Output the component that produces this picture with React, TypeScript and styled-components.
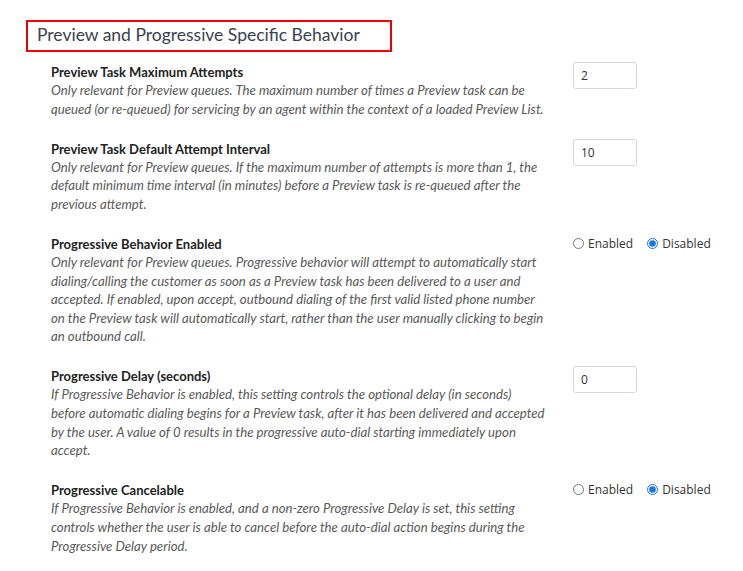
import React from "react";
import styled, { createGlobalStyle } from "styled-components";

const Global = createGlobalStyle`
  html, body { margin: 0; padding: 0; background: #fff; }
  body { font-family: Lato, "Liberation Sans", sans-serif; }
`;

const Page = styled.div`
  width: 743px;
  height: 571px;
  padding: 20px 0 0 26px;
  box-sizing: border-box;
  overflow: hidden;
`;

const Title = styled.h2`
  margin: 0;
  display: inline-block;
  width: 366px;
  height: 32px;
  box-sizing: border-box;
  border: 2px solid #f00000;
  padding: 1px 0 0 9px;
  font-size: 17.5px;
  font-weight: 400;
  color: #3a4150;
  line-height: 24px;
`;

const List = styled.div`
  display: flex;
  flex-direction: column;
  padding: 11px 0 0 25px;
  gap: 21.5px;
`;

const Row = styled.div`
  display: grid;
  grid-template-columns: 522px 1fr;
  align-items: start;
`;

const Info = styled.div`
  display: flex;
  flex-direction: column;
`;

const Label = styled.div`
  font-size: 13px;
  font-weight: 700;
  color: #222;
  line-height: 18px;
`;

const Desc = styled.div`
  font-size: 13.2px;
  font-style: italic;
  color: #595959;
  line-height: 18.6px;
`;

const DescLine = styled.span`
  display: block;
  white-space: nowrap;
`;

const Control = styled.div<{ $offset: number }>`
  margin-top: ${(p) => p.$offset}px;
  display: flex;
  align-items: center;
  gap: 14px;
`;

const NumInput = styled.input`
  width: 64px;
  height: 27px;
  box-sizing: border-box;
  border: 1px solid #d3d8de;
  border-radius: 3px;
  padding: 0 7px;
  font-family: "Open Sans", sans-serif;
  font-size: 12px;
  color: #333;
  outline: none;
`;

const RadioLabel = styled.label`
  display: flex;
  align-items: center;
  gap: 4px;
  font-family: "Open Sans", sans-serif;
  font-size: 12px;
  color: #333;
`;

const Radio = styled.input`
  margin: 0;
  width: 11px;
  height: 11px;
  accent-color: #1a73e8;
`;

type Item = {
  label: string;
  lines: string[];
  kind: "input" | "radio";
  value?: string;
};

const items: Item[] = [
  {
    label: "Preview Task Maximum Attempts",
    lines: [
      "Only relevant for Preview queues. The maximum number of times a Preview task can be",
      "queued (or re-queued) for servicing by an agent within the context of a loaded Preview List.",
    ],
    kind: "input",
    value: "2",
  },
  {
    label: "Preview Task Default Attempt Interval",
    lines: [
      "Only relevant for Preview queues. If the maximum number of attempts is more than 1, the",
      "default minimum time interval (in minutes) before a Preview task is re-queued after the",
      "previous attempt.",
    ],
    kind: "input",
    value: "10",
  },
  {
    label: "Progressive Behavior Enabled",
    lines: [
      "Only relevant for Preview queues. Progressive behavior will attempt to automatically start",
      "dialing/calling the customer as soon as a Preview task has been delivered to a user and",
      "accepted. If enabled, upon accept, outbound dialing of the first valid listed phone number",
      "on the Preview task will automatically start, rather than the user manually clicking to begin",
      "an outbound call.",
    ],
    kind: "radio",
  },
  {
    label: "Progressive Delay (seconds)",
    lines: [
      "If Progressive Behavior is enabled, this setting controls the optional delay (in seconds)",
      "before automatic dialing begins for a Preview task, after it has been delivered and accepted",
      "by the user. A value of 0 results in the progressive auto-dial starting immediately upon",
      "accept.",
    ],
    kind: "input",
    value: "0",
  },
  {
    label: "Progressive Cancelable",
    lines: [
      "If Progressive Behavior is enabled, and a non-zero Progressive Delay is set, this setting",
      "controls whether the user is able to cancel before the auto-dial action begins during the",
      "Progressive Delay period.",
    ],
    kind: "radio",
  },
];

export default function App() {
  return (
    <>
      <Global />
      <Page>
        <Title>Preview and Progressive Specific Behavior</Title>
        <List>
          {items.map((it, i) => (
            <Row key={i}>
              <Info>
                <Label>{it.label}</Label>
                <Desc>
                  {it.lines.map((l, j) => (
                    <DescLine key={j}>{l}</DescLine>
                  ))}
                </Desc>
              </Info>
              {it.kind === "input" ? (
                <Control $offset={-1}>
                  <NumInput defaultValue={it.value} />
                </Control>
              ) : (
                <Control $offset={0}>
                  <RadioLabel>
                    <Radio type="radio" name={`r${i}`} /> Enabled
                  </RadioLabel>
                  <RadioLabel>
                    <Radio type="radio" name={`r${i}`} defaultChecked /> Disabled
                  </RadioLabel>
                </Control>
              )}
            </Row>
          ))}
        </List>
      </Page>
    </>
  );
}
